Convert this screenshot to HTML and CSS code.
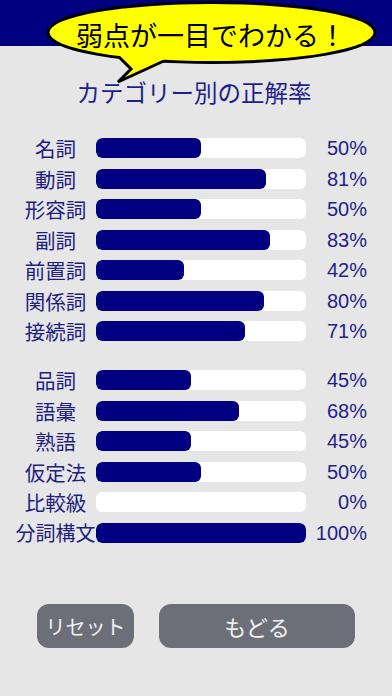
FILE: index.html
```html
<!DOCTYPE html>
<html lang="ja">
<head>
<meta charset="utf-8">
<title>カテゴリー別の正解率</title>
<link rel="stylesheet" href="styles.css">
</head>
<body>
<div class="screen">
  <header class="topbar"></header>
  <svg class="bubble" width="392" height="90" viewBox="0 0 392 90" aria-hidden="true">
    <ellipse cx="211.5" cy="32.5" rx="162" ry="28.5" fill="#ffff00" stroke="#000" stroke-width="6"/>
    <polygon points="108,46 131,69 118,82 190,49" fill="#ffff00" stroke="#000" stroke-width="3" stroke-linejoin="miter"/>
    <ellipse cx="211.5" cy="32.5" rx="162" ry="28.5" fill="#ffff00"/>
  </svg>
  <div class="bubble-text">弱点が一目でわかる！</div>

  <h1 class="title">カテゴリー別の正解率</h1>

  <div class="group">
    <div class="row"><span class="label">名詞</span><span class="track"><span class="fill" style="width:50%"></span></span><span class="pct">50%</span></div>
    <div class="row"><span class="label">動詞</span><span class="track"><span class="fill" style="width:81%"></span></span><span class="pct">81%</span></div>
    <div class="row"><span class="label">形容詞</span><span class="track"><span class="fill" style="width:50%"></span></span><span class="pct">50%</span></div>
    <div class="row"><span class="label">副詞</span><span class="track"><span class="fill" style="width:83%"></span></span><span class="pct">83%</span></div>
    <div class="row"><span class="label">前置詞</span><span class="track"><span class="fill" style="width:42%"></span></span><span class="pct">42%</span></div>
    <div class="row"><span class="label">関係詞</span><span class="track"><span class="fill" style="width:80%"></span></span><span class="pct">80%</span></div>
    <div class="row"><span class="label">接続詞</span><span class="track"><span class="fill" style="width:71%"></span></span><span class="pct">71%</span></div>
  </div>

  <div class="group group-second">
    <div class="row"><span class="label">品詞</span><span class="track"><span class="fill" style="width:45%"></span></span><span class="pct">45%</span></div>
    <div class="row"><span class="label">語彙</span><span class="track"><span class="fill" style="width:68%"></span></span><span class="pct">68%</span></div>
    <div class="row"><span class="label">熟語</span><span class="track"><span class="fill" style="width:45%"></span></span><span class="pct">45%</span></div>
    <div class="row"><span class="label">仮定法</span><span class="track"><span class="fill" style="width:50%"></span></span><span class="pct">50%</span></div>
    <div class="row"><span class="label">比較級</span><span class="track"><span class="fill" style="width:0%"></span></span><span class="pct">0%</span></div>
    <div class="row"><span class="label label-long">分詞構文</span><span class="track"><span class="fill" style="width:100%"></span></span><span class="pct">100%</span></div>
  </div>

  <div class="buttons">
    <button class="btn btn-reset">リセット</button>
    <button class="btn btn-back">もどる</button>
  </div>
</div>
</body>
</html>
```

FILE: styles.css
```css
html, body {
  margin: 0;
  padding: 0;
  background: #e6e6e6;
}

.screen {
  position: relative;
  width: 392px;
  height: 696px;
  overflow: hidden;
  background: #e6e6e6;
  font-family: "Liberation Sans", "Noto Sans CJK JP", sans-serif;
  display: flex;
  flex-direction: column;
}

.topbar {
  height: 46px;
  background: #000080;
  flex: none;
}

.bubble {
  position: absolute;
  left: 0;
  top: 0;
}

.bubble-text {
  position: absolute;
  left: 61px;
  top: 16px;
  width: 300px;
  height: 38px;
  line-height: 38px;
  text-align: center;
  font-family: "Noto Sans CJK JP", sans-serif;
  font-size: 27px;
  color: #000;
  white-space: nowrap;
}

.title {
  margin: 31px 0 0;
  height: 30px;
  line-height: 30px;
  text-align: center;
  font-family: "Noto Sans CJK JP", sans-serif;
  font-weight: normal;
  font-size: 23.5px;
  color: #1f1f88;
  padding-right: 4px;
}

.group {
  margin-top: 25.75px;
  display: flex;
  flex-direction: column;
}

.group-second {
  margin-top: 18.5px;
}

.row {
  height: 30.5px;
  display: grid;
  grid-template-columns: 81px 210px 61px;
  align-items: center;
  padding-left: 15px;
}

.label {
  text-align: center;
  font-family: "Noto Sans CJK JP", sans-serif;
  font-size: 20.5px;
  color: #1f1f80;
  white-space: nowrap;
  line-height: 30px;
}

.label-long {
  font-size: 20px;
}

.track {
  display: block;
  height: 20px;
  background: #ffffff;
  border-radius: 6px;
  overflow: hidden;
}

.fill {
  display: block;
  height: 100%;
  background: #000080;
  border-radius: 6px;
}

.pct {
  text-align: right;
  font-family: "Liberation Sans", sans-serif;
  font-size: 20px;
  color: #1f1f88;
  line-height: 30px;
}

.buttons {
  margin-top: 56.25px;
  display: flex;
  gap: 25px;
  padding-left: 37px;
}

.btn {
  height: 44px;
  border: none;
  border-radius: 12px;
  background: #6d6f78;
  color: #f2f2f2;
  font-family: "Noto Sans CJK JP", sans-serif;
  padding: 0;
  cursor: pointer;
}

.btn-reset {
  width: 97px;
  font-size: 20px;
}

.btn-back {
  width: 196px;
  font-size: 22px;
}
```
